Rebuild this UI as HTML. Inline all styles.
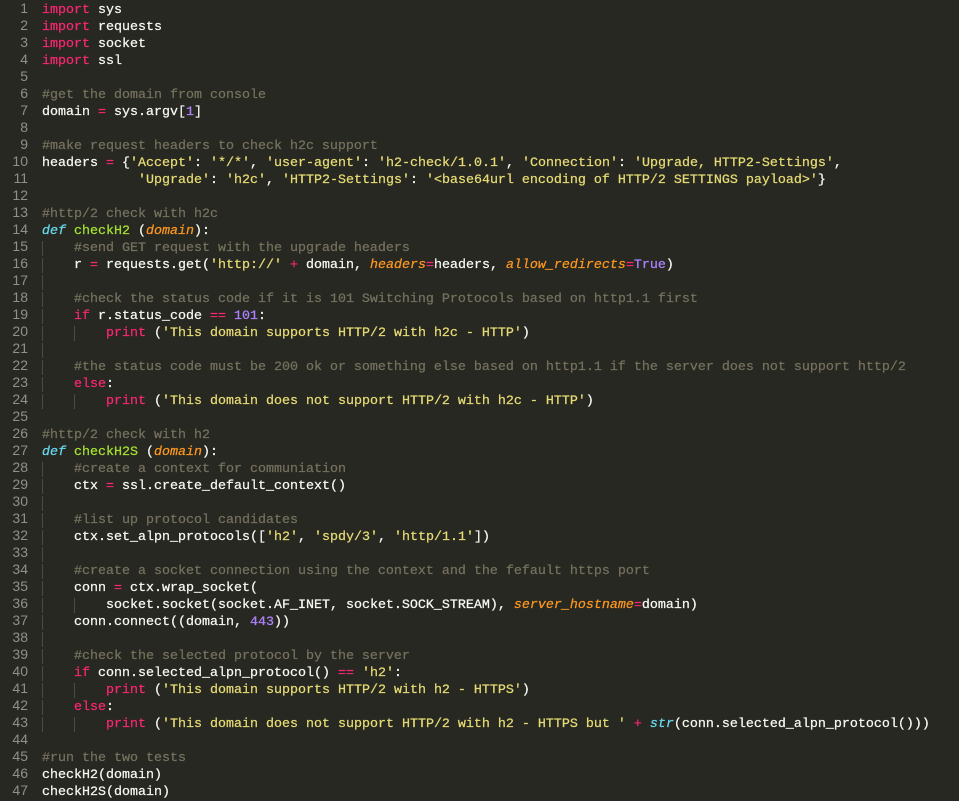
<!DOCTYPE html>
<html><head><meta charset="utf-8"><style>
html,body{margin:0;padding:0;background:#272822;width:959px;height:801px;overflow:hidden}
pre{margin:0;padding-top:2px;font-family:"Liberation Mono",monospace;font-size:13.33px;line-height:17px;color:#f8f8f2}
.ln{position:absolute;left:0;top:-2px;width:28px;text-align:right;color:#8f908a;font-family:"Liberation Sans",sans-serif;font-size:14px}
.code{position:absolute;left:42px;top:0;-webkit-text-stroke:0.25px currentColor}
.k{color:#f92672}.s{color:#e6db74}.c{color:#75715e}.n{color:#ae81ff}
.d{color:#66d9ef;font-style:italic}.f{color:#a6e22e}.p{color:#fd971f;font-style:italic}
.g{font-style:normal;box-shadow:inset 1px 0 0 rgba(120,120,110,.45)}
</style></head><body>
<pre class="ln">1
2
3
4
5
6
7
8
9
10
11
12
13
14
15
16
17
18
19
20
21
22
23
24
25
26
27
28
29
30
31
32
33
34
35
36
37
38
39
40
41
42
43
44
45
46
47</pre>
<pre class="code"><span class="k">import</span> sys
<span class="k">import</span> requests
<span class="k">import</span> socket
<span class="k">import</span> ssl

<span class="c">#get the domain from console</span>
domain <span class="k">=</span> sys.argv[<span class="n">1</span>]

<span class="c">#make request headers to check h2c support</span>
headers <span class="k">=</span> {<span class="s">'Accept'</span>: <span class="s">'*/*'</span>, <span class="s">'user-agent'</span>: <span class="s">'h2-check/1.0.1'</span>, <span class="s">'Connection'</span>: <span class="s">'Upgrade, HTTP2-Settings'</span>,
            <span class="s">'Upgrade'</span>: <span class="s">'h2c'</span>, <span class="s">'HTTP2-Settings'</span>: <span class="s">'&lt;base64url encoding of HTTP/2 SETTINGS payload&gt;'</span>}

<span class="c">#http/2 check with h2c</span>
<span class="d">def</span> <span class="f">checkH2</span> (<span class="p">domain</span>):
<i class="g">    </i><span class="c">#send GET request with the upgrade headers</span>
<i class="g">    </i>r <span class="k">=</span> requests.get(<span class="s">'http://'</span> <span class="k">+</span> domain, <span class="p">headers</span><span class="k">=</span>headers, <span class="p">allow_redirects</span><span class="k">=</span><span class="n">True</span>)
<i class="g">    </i>
<i class="g">    </i><span class="c">#check the status code if it is 101 Switching Protocols based on http1.1 first</span>
<i class="g">    </i><span class="k">if</span> r.status_code <span class="k">==</span> <span class="n">101</span>:
<i class="g">    </i><i class="g">    </i><span class="k">print</span> (<span class="s">'This domain supports HTTP/2 with h2c - HTTP'</span>)
<i class="g">    </i>
<i class="g">    </i><span class="c">#the status code must be 200 ok or something else based on http1.1 if the server does not support http/2</span>
<i class="g">    </i><span class="k">else</span>:
<i class="g">    </i><i class="g">    </i><span class="k">print</span> (<span class="s">'This domain does not support HTTP/2 with h2c - HTTP'</span>)

<span class="c">#http/2 check with h2</span>
<span class="d">def</span> <span class="f">checkH2S</span> (<span class="p">domain</span>):
<i class="g">    </i><span class="c">#create a context for communiation</span>
<i class="g">    </i>ctx <span class="k">=</span> ssl.create_default_context()
<i class="g">    </i>
<i class="g">    </i><span class="c">#list up protocol candidates</span>
<i class="g">    </i>ctx.set_alpn_protocols([<span class="s">'h2'</span>, <span class="s">'spdy/3'</span>, <span class="s">'http/1.1'</span>])
<i class="g">    </i>
<i class="g">    </i><span class="c">#create a socket connection using the context and the fefault https port</span>
<i class="g">    </i>conn <span class="k">=</span> ctx.wrap_socket(
<i class="g">    </i><i class="g">    </i>socket.socket(socket.AF_INET, socket.SOCK_STREAM), <span class="p">server_hostname</span><span class="k">=</span>domain)
<i class="g">    </i>conn.connect((domain, <span class="n">443</span>))
<i class="g">    </i>
<i class="g">    </i><span class="c">#check the selected protocol by the server</span>
<i class="g">    </i><span class="k">if</span> conn.selected_alpn_protocol() <span class="k">==</span> <span class="s">'h2'</span>:
<i class="g">    </i><i class="g">    </i><span class="k">print</span> (<span class="s">'This domain supports HTTP/2 with h2 - HTTPS'</span>)
<i class="g">    </i><span class="k">else</span>:
<i class="g">    </i><i class="g">    </i><span class="k">print</span> (<span class="s">'This domain does not support HTTP/2 with h2 - HTTPS but '</span> <span class="k">+</span> <span class="d">str</span>(conn.selected_alpn_protocol()))

<span class="c">#run the two tests</span>
checkH2(domain)
checkH2S(domain)</pre>
</body></html>
